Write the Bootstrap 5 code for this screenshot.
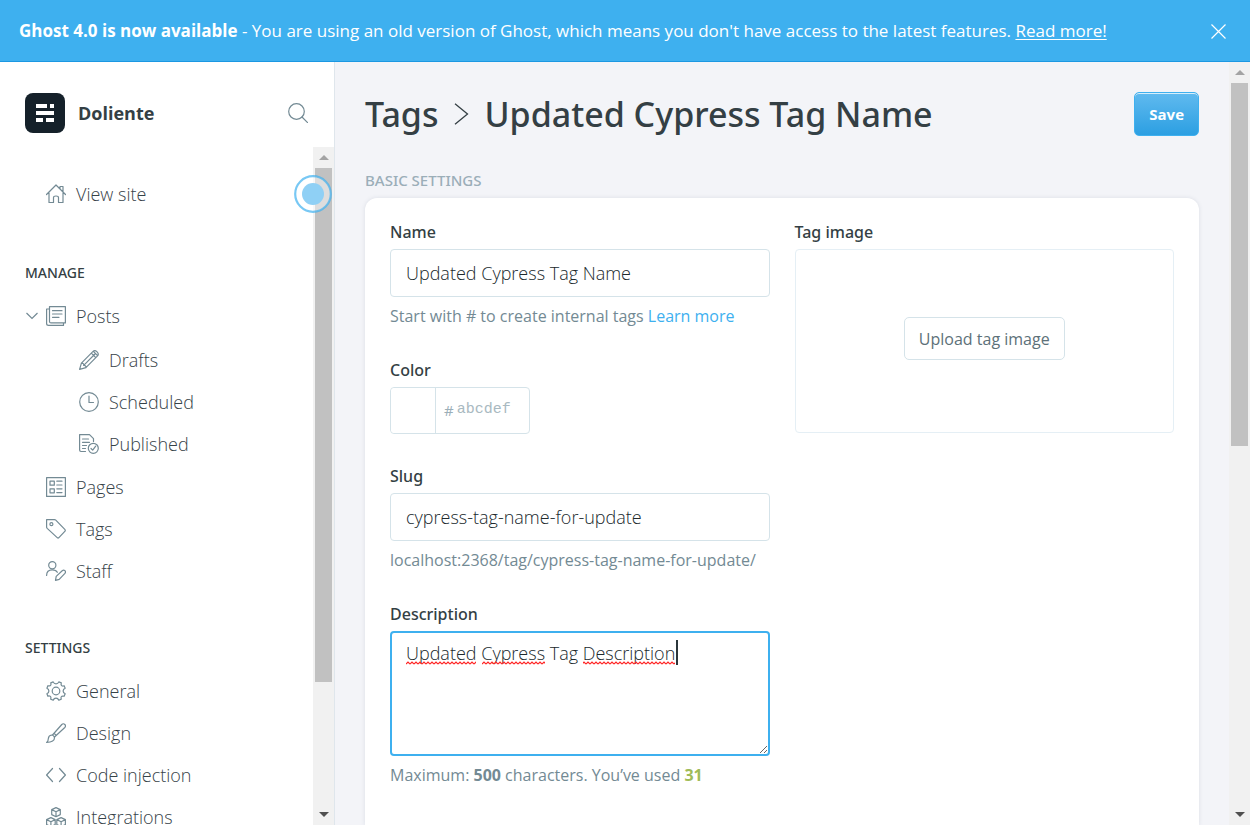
<!DOCTYPE html>
<html lang="en">
<head>
<meta charset="utf-8">
<meta name="viewport" content="width=device-width, initial-scale=1">
<title>Tags - Updated Cypress Tag Name</title>
<link href="https://cdn.jsdelivr.net/npm/bootstrap@5.3.0/dist/css/bootstrap.min.css" rel="stylesheet">
<style>
  :root { --gh-blue: #3eb0ef; --gh-dark: #343f44; --gh-mid: #738a94; --gh-line: #d5e3e9; }
  body { font-family: "Open Sans", "Noto Sans", sans-serif; color: var(--gh-dark); background: #f3f4f8; font-size: 17px; }
  svg { display: block; flex: none; }
  .gh-icon { width: 20px; height: 20px; fill: none; stroke: var(--gh-mid); stroke-width: 1.2; stroke-linecap: round; stroke-linejoin: round; }

  .gh-banner { height: 62px; padding: 1px 24px 0 19px; background: var(--gh-blue); border-bottom: 1px solid #1c98e2; color: #fff; }
  .gh-banner a { color: #fff; text-underline-offset: 2px; }
  .icon-btn { border: 0; background: none; padding: 0; }

  .gh-side { width: 335px; background: #fff; border-right: 1px solid #dfe6ec; }
  .gh-side-head { padding: 31px 26px 14px 25px; gap: 13px; }
  .gh-site { font-size: 18px; font-weight: 700; }
  .gh-menu { padding-top: 26px; }
  .gh-menu ul { list-style: none; margin: 0; padding: 0; }
  .gh-menu a { display: flex; align-items: center; height: 42px; padding-left: 46px; gap: 10px; color: #364248; text-decoration: none; font-weight: 300; font-size: 18px; }
  .gh-menu .gh-sub { margin: 2px 0 1px; }
  .gh-menu .gh-sub a { padding-left: 79px; }
  .gh-menu .has-toggle a { padding-left: 8px; }
  .gh-toggle { width: 38px; padding-left: 26px; }
  .gh-menu h2 { margin: 0; padding-left: 25px; font-family: "Noto Sans", sans-serif; font-size: 14px; font-weight: 500; line-height: 20px; }
  .gh-group { margin-top: 48px; }
  .gh-group + .gh-group { margin-top: 46px; }
  .gh-group h2 { margin-bottom: 12px; }
  .gh-beacon { right: -19px; top: 2px; width: 38px; height: 38px; z-index: 2; }

  .rail { width: 21px; background: #f1f1f1; padding: 0 2px; flex: none; }
  .rail span { height: 21px; display: flex; align-items: center; justify-content: center; flex: none; }
  .rail .thumb { background: #c1c1c1; }

  .gh-main { padding: 30px 30px 0 30px; }
  .gh-title { font-family: "Noto Sans", sans-serif; font-size: 34px; font-weight: 500; line-height: 44px; gap: 15px; margin: 0; }
  .gh-title a { color: inherit; text-decoration: none; }
  .gh-save { height: 44px; padding: 0 14px; border: 1px solid #3eb0ef; border-radius: 5px; background: linear-gradient(#60baef, #2c9fe2); box-shadow: inset 0 1px 0 rgba(255,255,255,.75); color: #fff; font-size: 15px; font-weight: 700; }
  .gh-caption { margin: 34px 0 8px; font-family: "Noto Sans", sans-serif; font-size: 15px; line-height: 20px; font-weight: 500; color: #9baeb8; }
  .gh-panel { background: #fff; border-radius: 12px 12px 0 0; padding: 22px 25px 0; box-shadow: 0 0 4px rgba(60,80,110,.13); }
  .gh-panel .row { --bs-gutter-x: 25px; }
  .gh-field { margin-bottom: 30px; }
  .gh-label { display: block; font-family: "Noto Sans", sans-serif; font-size: 16px; line-height: 24px; font-weight: 500; margin-bottom: 5px; }
  .gh-hint { font-size: 16px; line-height: 24px; margin: 7px 0 0; color: var(--gh-mid); white-space: nowrap; }
  .gh-hint a { color: var(--gh-blue); text-decoration: none; }
  .gh-used { color: #9fbb58; }
  .gh-input.form-control { height: 48px; padding: 0 15px; border-color: var(--gh-line); border-radius: 4px; font-size: 18px; font-weight: 300; color: #20292d; }
  textarea.gh-input.form-control { height: 125px; padding: 6px 14px; line-height: 28px; border: 2px solid var(--gh-blue); resize: vertical; }
  .gh-marks { left: 16px; top: 8px; pointer-events: none; }
  .gh-color { width: 140px; height: 47px; border: 1px solid var(--gh-line); border-radius: 4px; }
  .gh-swatch { width: 45px; height: 45px; border: 0; border-right: 1px solid var(--gh-line); background: #fff; border-radius: 4px 0 0 4px; padding: 0; }
  .gh-hash { padding: 0 3px 0 8px; font-size: 15px; color: #9baeb8; }
  .gh-color input { min-width: 0; border: 0; padding: 0; background: none; font-family: "Liberation Mono", monospace; font-size: 15px; }
  .gh-color input::placeholder { color: #a9b9c1; }
  .gh-drop { height: 184px; padding-bottom: 5px; border: 1px solid #e5eff5; border-radius: 4px; }
  .gh-upload { height: 43px; padding: 0 14px; border: 1px solid var(--gh-line); border-radius: 5px; background: #fff; color: #5d7179; font-size: 16px; }
</style>
</head>
<body class="vh-100 overflow-hidden d-flex flex-column">
<aside class="gh-banner d-flex align-items-center justify-content-between flex-shrink-0">
  <div><strong>Ghost 4.0 is now available</strong> - You are using an old version of Ghost, which means you don't have access to the latest features. <a href="#">Read more!</a></div>
  <button class="icon-btn" type="button" aria-label="Close"><svg width="15" height="15" viewBox="0 0 15 15" fill="none" stroke="#fff" stroke-width="1.2"><path d="M.5.5l14 14M14.500 .5l-14 14"/></svg></button>
</aside>

<div class="d-flex flex-grow-1 overflow-hidden">
  <nav class="gh-side d-flex flex-column flex-shrink-0">
    <div class="gh-side-head d-flex align-items-center">
      <svg width="40" height="40" viewBox="0 0 40 40"><rect width="40" height="40" rx="8" fill="#15212a"/><path fill="#fff" d="M11 11h11v4H11zM25 11h4v4h-4zM11 18h18v4H11zM11 25h7v4h-7zM21 25h8v4h-8z"/></svg>
      <span class="gh-site flex-grow-1">Doliente</span>
      <button class="icon-btn" type="button" aria-label="Search"><svg class="gh-icon" viewBox="0 0 20 20"><circle cx="8.500" cy="8.500" r="7.800"/><path d="M14 14l5.600 5.600"/></svg></button>
    </div>
    <div class="d-flex flex-grow-1 overflow-hidden">
      <div class="gh-menu flex-grow-1">
        <div class="position-relative">
          <a href="#"><svg class="gh-icon" viewBox="0 0 20 20"><path d="M.5 10.500L10 1l9.500 9.500M3 9v9.500h4.500v-5q0-1.500 2.500-1.500t2.500 1.500v5H17V9M14 4.500V2.500h3V7.500"/></svg>View site</a>
          <svg class="gh-beacon position-absolute" viewBox="0 0 38 38" aria-hidden="true"><circle cx="19" cy="19" r="17.800" fill="#fff" fill-opacity=".45" stroke="#3eb0ef" stroke-opacity=".7" stroke-width="2.200"/><circle cx="19" cy="19" r="11" fill="#8fd0f5"/></svg>
        </div>
        <section class="gh-group">
          <h2>MANAGE</h2>
          <ul>
            <li class="has-toggle d-flex align-items-center">
              <button class="icon-btn gh-toggle" type="button" aria-label="Toggle posts"><svg width="12" height="8" viewBox="0 0 12 8" fill="none" stroke="#738a94" stroke-width="1.200"><path d="M.5 1L6 6.500 11.500 1"/></svg></button>
              <a href="#"><svg class="gh-icon" viewBox="0 0 20 20"><path d="M3.500.6h15.900v16.300H5q-1.500 0-1.500-1.500zM3.500 3H.6v14.500q0 1.900 2 1.900h14.900V17M6.500 4.700h9.500M6.500 8h9.500M6.500 11.300h6.500"/></svg>Posts</a>
            </li>
          </ul>
          <ul class="gh-sub">
            <li><a href="#"><svg class="gh-icon" viewBox="0 0 20 20"><path d="M.6 19.400l1.800-6.300L13.800 1.700q2-2 4 0l.5.500q2 2 0 4L6.900 17.600zM2.400 13.100q2.600-.2 2.300 2.300 2.400-.2 2.200 2.200M4.700 15.400L16 4M12.300 3.200l4.500 4.500M14.400 1.400l4.200 4.200"/></svg>Drafts</a></li>
            <li><a href="#"><svg class="gh-icon" viewBox="0 0 20 20"><circle cx="10" cy="10" r="9.300"/><path d="M10 4v6.500h4.500"/></svg>Scheduled</a></li>
            <li><a href="#"><svg class="gh-icon" viewBox="0 0 20 20"><path d="M6.500 17.500H2q-1.400 0-1.400-1.400V.6h9.900l4 4v2.800M3.500 5h6M3.500 8.300h7M3.500 11.500h4M3.500 14.500h3"/><circle cx="14.300" cy="14.300" r="5"/><path d="M12 14.500l1.700 1.700 3-4"/></svg>Published</a></li>
          </ul>
          <ul>
            <li><a href="#"><svg class="gh-icon" viewBox="0 0 20 20"><path d="M.6.6h18.800v18.800H.6zM4 4.200h4.300v4H4zM4 11.800h4.300v4H4zM10.800 4.200H16M10.800 8h5.200M10.800 11.800H16M10.800 15.600H16"/></svg>Pages</a></li>
            <li><a href="#"><svg class="gh-icon" viewBox="0 0 20 20"><path d="M.6.6h7.900q.8 0 1.300.5l9 9.300q1 1 0 2l-5.900 6.200q-.8.8-1.700 0L1.200 9.400Q.6 8.800.6 8z"/><circle cx="5.400" cy="5.200" r="1.500"/></svg>Tags</a></li>
            <li><a href="#"><svg class="gh-icon" viewBox="0 0 20 20"><circle cx="6.300" cy="4.200" r="3.600"/><path d="M.6 14.500q0-5.700 5.700-5.700 3.700 0 5 2.500M9.500 19.400l.7-4 6-5.700q1.500-1.200 2.700 0t0 2.700l-5.700 6z"/></svg>Staff</a></li>
          </ul>
        </section>
        <section class="gh-group">
          <h2>SETTINGS</h2>
          <ul>
            <li><a href="#"><svg class="gh-icon" viewBox="0 0 20 20"><circle cx="10" cy="10" r="3.800"/><path d="M7.200.9Q8 2.900 10 2.900T12.800.9L15.300 1.900Q14.600 4 15.800 4.700T18.100 4.700L19.200 7.200Q17.100 8 17.100 10T19.200 12.800L18.100 15.300Q16 14.600 15.300 15.800T15.300 18.100L12.800 19.200Q12 17.100 10 17.100T7.200 19.200L4.700 18.100Q5.400 16 4.200 15.300T1.900 15.300L.9 12.800Q2.900 12 2.900 10T.9 7.200L1.900 4.700Q4 5.400 4.700 4.200T4.700 1.900Z"/></svg>General</a></li>
            <li><a href="#"><svg class="gh-icon" viewBox="0 0 20 20"><path d="M.6 19.400q1.700-1.200 1.700-3.700Q2.600 12.300 5.500 12q2.300 0 3 2.500.2 4.700-7.900 4.900zM6.500 12L15.800 1.500q1.500-1.500 3 0t0 3L8.500 14M8 10.200l2.200 2.200"/></svg>Design</a></li>
            <li><a href="#"><svg class="gh-icon" viewBox="0 0 20 20"><path d="M6.500 3.500L.6 10l5.900 6.500M13.500 3.500l5.900 6.500-5.900 6.500"/></svg>Code injection</a></li>
            <li><a href="#"><svg class="gh-icon" viewBox="0 0 20 20"><path d="M10 .6l4.300 2v5L10 9.700 5.700 7.600v-5zM5.700 2.600L10 4.700l4.300-2.100M10 4.700v5M4.900 10.600l4.300 2v5l-4.300 2-4.300-2v-5zM.6 12.600l4.300 2.100 4.300-2.100M4.900 14.700v4.900M15.100 10.600l4.300 2v5l-4.300 2-4.300-2v-5zM10.800 12.600l4.300 2.100 4.300-2.100M15.100 14.700v4.900"/></svg>Integrations</a></li>
          </ul>
        </section>
      </div>
      <div class="rail d-flex flex-column" aria-hidden="true">
        <span><svg width="10" height="5" viewBox="0 0 10 5"><path fill="#a3a3a3" d="M0 5l5-5 5 5z"/></svg></span>
        <div class="flex-grow-1"><div class="thumb" style="height:80.800%"></div></div>
        <span><svg width="10" height="5" viewBox="0 0 10 5"><path fill="#505050" d="M0 0l5 5 5-5z"/></svg></span>
      </div>
    </div>
  </nav>

  <main class="gh-main flex-grow-1 d-flex flex-column overflow-hidden">
    <header class="d-flex align-items-center justify-content-between">
      <h1 class="gh-title d-flex align-items-center"><a href="#">Tags</a><svg width="16" height="22" viewBox="0 0 16 22" fill="none" stroke="#343f44" stroke-width="1.300"><path d="M2 .7L14.500 11 2 21.300"/></svg><span>Updated Cypress Tag Name</span></h1>
      <button class="gh-save" type="button">Save</button>
    </header>
    <h2 class="gh-caption">BASIC SETTINGS</h2>
    <form class="gh-panel flex-grow-1">
      <div class="row">
        <div class="col-6">
          <div class="gh-field">
            <label class="gh-label" for="tag-name">Name</label>
            <input class="form-control gh-input" id="tag-name" type="text" value="Updated Cypress Tag Name">
            <p class="gh-hint">Start with # to create internal tags <a href="#">Learn more</a></p>
          </div>
          <div class="gh-field">
            <label class="gh-label" for="tag-color">Color</label>
            <div class="gh-color d-flex align-items-center">
              <button class="gh-swatch flex-shrink-0" type="button" aria-label="Pick a color"></button>
              <span class="gh-hash">#</span>
              <input class="flex-grow-1" id="tag-color" type="text" placeholder="abcdef">
            </div>
          </div>
          <div class="gh-field">
            <label class="gh-label" for="tag-slug">Slug</label>
            <input class="form-control gh-input" id="tag-slug" type="text" value="cypress-tag-name-for-update">
            <p class="gh-hint">localhost:2368/tag/cypress-tag-name-for-update/</p>
          </div>
          <div class="gh-field">
            <label class="gh-label" for="tag-desc">Description</label>
            <div class="position-relative">
              <textarea class="form-control gh-input" id="tag-desc" spellcheck="false">Updated Cypress Tag Description</textarea>
              <svg class="gh-marks position-absolute" width="300" height="28" viewBox="0 0 300 28" aria-hidden="true">
                <defs><pattern id="wave" width="4" height="4" y="22" patternUnits="userSpaceOnUse"><path d="M0 3l2-2 2 2" fill="none" stroke="#f22" stroke-width="1.200"/></pattern></defs>
                <path fill="url(#wave)" d="M0 22h70v4H0zM76 22h63v4H76zM177 22h92v4h-92z"/>
                <path fill="#2b363b" d="M270 1h2v25h-2z"/>
              </svg>
            </div>
            <p class="gh-hint">Maximum: <b>500</b> characters. You’ve used <b class="gh-used">31</b></p>
          </div>
        </div>
        <div class="col-6">
          <span class="gh-label">Tag image</span>
          <div class="gh-drop d-flex align-items-center justify-content-center">
            <button class="gh-upload" type="button">Upload tag image</button>
          </div>
        </div>
      </div>
    </form>
  </main>
  <div class="rail d-flex flex-column" aria-hidden="true">
    <span><svg width="10" height="5" viewBox="0 0 10 5"><path fill="#a3a3a3" d="M0 5l5-5 5 5z"/></svg></span>
    <div class="flex-grow-1"><div class="thumb" style="height:50.300%"></div></div>
    <span><svg width="10" height="5" viewBox="0 0 10 5"><path fill="#505050" d="M0 0l5 5 5-5z"/></svg></span>
  </div>
</div>
<script src="https://cdn.jsdelivr.net/npm/bootstrap@5.3.0/dist/js/bootstrap.bundle.min.js"></script>
</body>
</html>
